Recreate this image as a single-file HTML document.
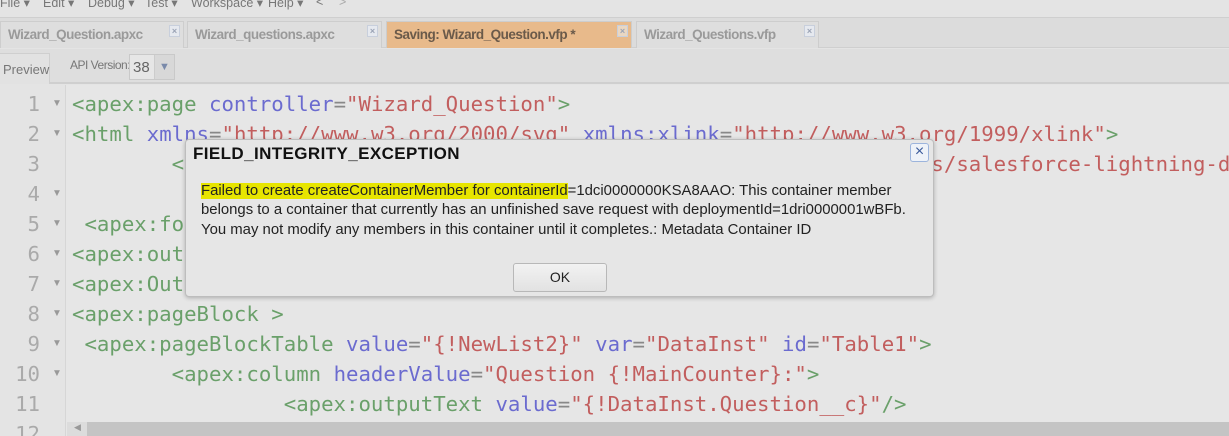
<!DOCTYPE html>
<html style="width:1229px;height:436px;overflow:hidden"><head><meta charset="utf-8"><style>
*{margin:0;padding:0;box-sizing:border-box}
body{width:1229px;height:436px;overflow:hidden;background:#e4e4e4;font-family:"Liberation Sans",sans-serif;position:relative}
.menu{position:absolute;top:-5px;left:0;height:20px;font-size:12.5px;color:#777;white-space:nowrap}
.menu span{position:absolute;top:0}
.tabbar{position:absolute;top:17px;left:0;width:1229px;height:31px;background:#dcdcdc;border-top:1px solid #cfcfcf;border-bottom:1px solid #cfcfcf}
.tab{position:absolute;top:3px;height:27px;border:1px solid #cdcdcd;border-bottom:none;background:#dedede;font-weight:bold;font-size:13.5px;letter-spacing:-0.5px;color:#9a9a9a;padding:5px 0 0 7px;white-space:nowrap}
.tab i{position:absolute;right:3px;top:3px;width:11px;height:12px;border:1px solid #c8cfdc;background:#e6e9ef;font-style:normal;font-size:9px;color:#9aa3b5;line-height:10px;text-align:center;letter-spacing:0}
.toolbar{position:absolute;top:49px;left:0;width:1229px;height:35px;background:#dedede;border-bottom:2px solid #cfcfcf}
.editor{position:absolute;top:85px;left:0;width:1229px;height:351px;background:#e6e6e6;overflow:hidden}
.gutter{position:absolute;top:0;left:0;width:66px;height:351px;background:#e4e4e4;border-right:1px solid #d6d6d6}
.ln{position:absolute;left:0;width:40px;text-align:right;font-family:"DejaVu Sans Mono",monospace;font-size:20.7px;color:#aaa;line-height:30px}
.fa{position:absolute;left:52px;font-size:10px;color:#999;line-height:30px}
.code{position:absolute;left:72px;font-family:"DejaVu Sans Mono",monospace;font-size:20.7px;line-height:30px;white-space:pre;color:#6aa06a}
.a{color:#6b6bcf}.s{color:#c25e5e}.e{color:#888}
.dlg{position:absolute;left:185px;top:139px;width:749px;height:158px;background:#e6e6e6;border:1px solid #bdbdbd;border-radius:4px;box-shadow:0 1px 4px rgba(0,0,0,.25)}
.dlg h1{position:absolute;left:7px;top:4px;font-size:17px;letter-spacing:0.4px;font-weight:bold;color:#111}
.x{position:absolute;left:724px;top:3px;width:19px;height:19px;border:1px solid #9cb4dc;border-radius:3px;background:#eef2f8;color:#3a5a9a;font-size:16px;line-height:16px;text-align:center}
.msg{position:absolute;left:15px;top:42px;font-size:14.9px;line-height:19.3px;color:#222;white-space:nowrap}
.hl{background:#e7e500}
.ok{position:absolute;left:327px;top:123px;width:94px;height:29px;border:1px solid #b8b8b8;border-radius:3px;background:linear-gradient(#f2f2f2,#e2e2e2);font-size:14px;text-align:center;line-height:27px;color:#222}
</style></head><body>
<div class="menu"><span style="left:0">File ▾</span><span style="left:43px">Edit ▾</span><span style="left:88px">Debug ▾</span><span style="left:145px">Test ▾</span><span style="left:191px">Workspace ▾</span><span style="left:268px">Help ▾</span><span style="left:316px">&lt;</span><span style="left:339px;color:#aaa">&gt;</span></div>
<div class="tabbar">
<div class="tab" style="left:0;width:184px">Wizard_Question.apxc<i>×</i></div>
<div class="tab" style="left:187px;width:195px">Wizard_questions.apxc<i>×</i></div>
<div class="tab" style="left:386px;width:246px;background:#e8ba8b;color:#6a5a4a">Saving: Wizard_Question.vfp *<i style="background:#ead7c2">×</i></div>
<div class="tab" style="left:636px;width:183px">Wizard_Questions.vfp<i>×</i></div>
</div>
<div class="toolbar">
<div style="position:absolute;left:0;top:4px;width:50px;height:31px;border:1px solid #cfcfcf;border-left:none;border-bottom:none;background:#e2e2e2;font-size:13px;color:#777;padding:8px 0 0 3px">Preview</div>
<div style="position:absolute;left:70px;top:9px;font-size:12px;letter-spacing:-0.5px;color:#777">API Version:</div>
<div style="position:absolute;left:129px;top:5px;width:46px;height:26px;border:1px solid #c9c9c9;background:#e6e6e6;font-size:15px;color:#666;padding:4px 0 0 3px">38<span style="position:absolute;right:0;top:0;width:20px;height:24px;background:#d8d8d8;border-left:1px solid #ccc;color:#7a8aaa;font-size:11px;text-align:center;line-height:24px">▼</span></div>
</div>
<div class="editor">
<div class="gutter"></div>
<div class="ln" style="top:4px">1<br>2<br>3<br>4<br>5<br>6<br>7<br>8<br>9<br>10<br>11<br>12</div>
<div class="fa" style="top:4px">▼<br>▼<br>&nbsp;<br>▼<br>▼<br>▼<br>▼<br>▼<br>▼<br>▼</div>
<div class="code" style="top:4px">&lt;apex:page <span class="a">controller</span><span class="e">=</span><span class="s">"Wizard_Question"</span>&gt;
&lt;html <span class="a">xmlns</span><span class="e">=</span><span class="s">"http://www.w3.org/2000/svg"</span> <span class="a">xmlns:xlink</span><span class="e">=</span><span class="s">"http://www.w3.org/1999/xlink"</span>&gt;
        &lt;apex:stylesheet <span class="a">value</span><span class="e">=</span><span class="s">"{!URLFOR($Resource.SLDS,'assets/styles/salesforce-lightning-design"</span>

 &lt;apex:form&gt;
&lt;apex:outputPanel&gt;
&lt;apex:OutputPanel&gt;
&lt;apex:pageBlock &gt;
 &lt;apex:pageBlockTable <span class="a">value</span><span class="e">=</span><span class="s">"{!NewList2}"</span> <span class="a">var</span><span class="e">=</span><span class="s">"DataInst"</span> <span class="a">id</span><span class="e">=</span><span class="s">"Table1"</span>&gt;
        &lt;apex:column <span class="a">headerValue</span><span class="e">=</span><span class="s">"Question {!MainCounter}:"</span>&gt;
                 &lt;apex:outputText <span class="a">value</span><span class="e">=</span><span class="s">"{!DataInst.Question__c}"</span>/&gt;
</div>
<div style="position:absolute;left:67px;top:337px;width:1162px;height:14px;background:#dcdcdc"><div style="position:absolute;left:20px;top:0;width:1142px;height:14px;background:#c4c4c4"></div><span style="position:absolute;left:7px;top:0;font-size:9px;color:#999">◀</span></div>
</div>
<div class="dlg">
<h1>FIELD_INTEGRITY_EXCEPTION</h1>
<div class="x">×</div>
<div class="msg"><span class="hl">Failed to create createContainerMember for containerId</span>=1dci0000000KSA8AAO: This container member<br>belongs to a container that currently has an unfinished save request with deploymentId=1dri0000001wBFb.<br>You may not modify any members in this container until it completes.: Metadata Container ID</div>
<div class="ok">OK</div>
</div>
</body></html>
